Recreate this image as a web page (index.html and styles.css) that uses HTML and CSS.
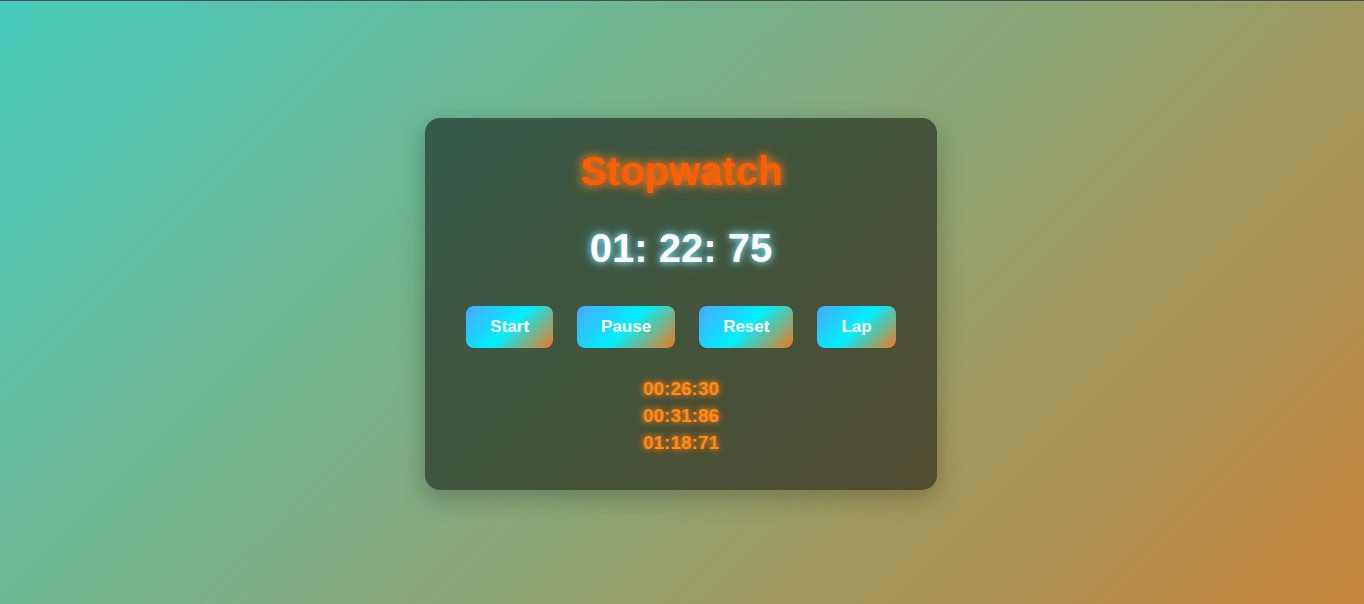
FILE: index.html
```html
<!DOCTYPE html>
<html lang="en">
<head>
<meta charset="utf-8">
<title>Stopwatch</title>
<link rel="stylesheet" href="styles.css">
</head>
<body>
  <div class="card">
    <h1 class="title">Stopwatch</h1>
    <div class="time">01: 22: 75</div>
    <div class="controls">
      <button class="btn">Start</button>
      <button class="btn">Pause</button>
      <button class="btn">Reset</button>
      <button class="btn">Lap</button>
    </div>
    <ul class="laps">
      <li>00:26:30</li>
      <li>00:31:86</li>
      <li>01:18:71</li>
    </ul>
  </div>
</body>
</html>
```
FILE: styles.css
```css
html, body {
  margin: 0;
  padding: 0;
}
body {
  height: calc(100vh - 1px);
  border-top: 1px solid #4a5259;
  background: linear-gradient(135deg, #46ccbb 0%, #c6853a 100%);
  display: flex;
  align-items: center;
  justify-content: center;
  font-family: "Liberation Sans", Arial, sans-serif;
}
.card {
  width: 452px;
  padding: 30px 30px 34px;
  margin: 3px 2px 0 0;
  background: rgba(0, 0, 0, 0.5);
  border-radius: 15px;
  box-shadow: 0 8px 25px rgba(0, 0, 0, 0.25);
  text-align: center;
}
.title {
  margin: 0;
  font-size: 40px;
  line-height: 46px;
  font-weight: bold;
  color: #ff5e00;
  text-shadow: 0 0 8px #ff7a1a, 0 0 14px rgba(255, 110, 20, 0.7);
}
.time {
  margin: 31px 0 35px;
  font-size: 40px;
  line-height: 46px;
  font-weight: bold;
  color: #ffffff;
  text-shadow: 0 0 6px rgba(120, 230, 255, 0.9), 0 0 12px rgba(120, 230, 255, 0.6);
}
.controls {
  display: flex;
  justify-content: center;
  gap: 24px;
}
.btn {
  border: none;
  padding: 0 24px;
  height: 42px;
  border-radius: 8px;
  font-family: "Liberation Sans", Arial, sans-serif;
  font-size: 17px;
  font-weight: bold;
  color: #ffffff;
  background: linear-gradient(135deg, #4aa6ff 0%, #00f0ff 50%, #f0761a 100%);
  cursor: pointer;
}
.laps {
  list-style: none;
  margin: 27px 0 0;
  padding: 0;
  font-size: 19px;
  line-height: 27px;
  font-weight: bold;
  color: #ff8c1a;
  text-shadow: 0 0 5px #ff7a10, 0 0 10px rgba(255, 120, 20, 0.6);
}
```
